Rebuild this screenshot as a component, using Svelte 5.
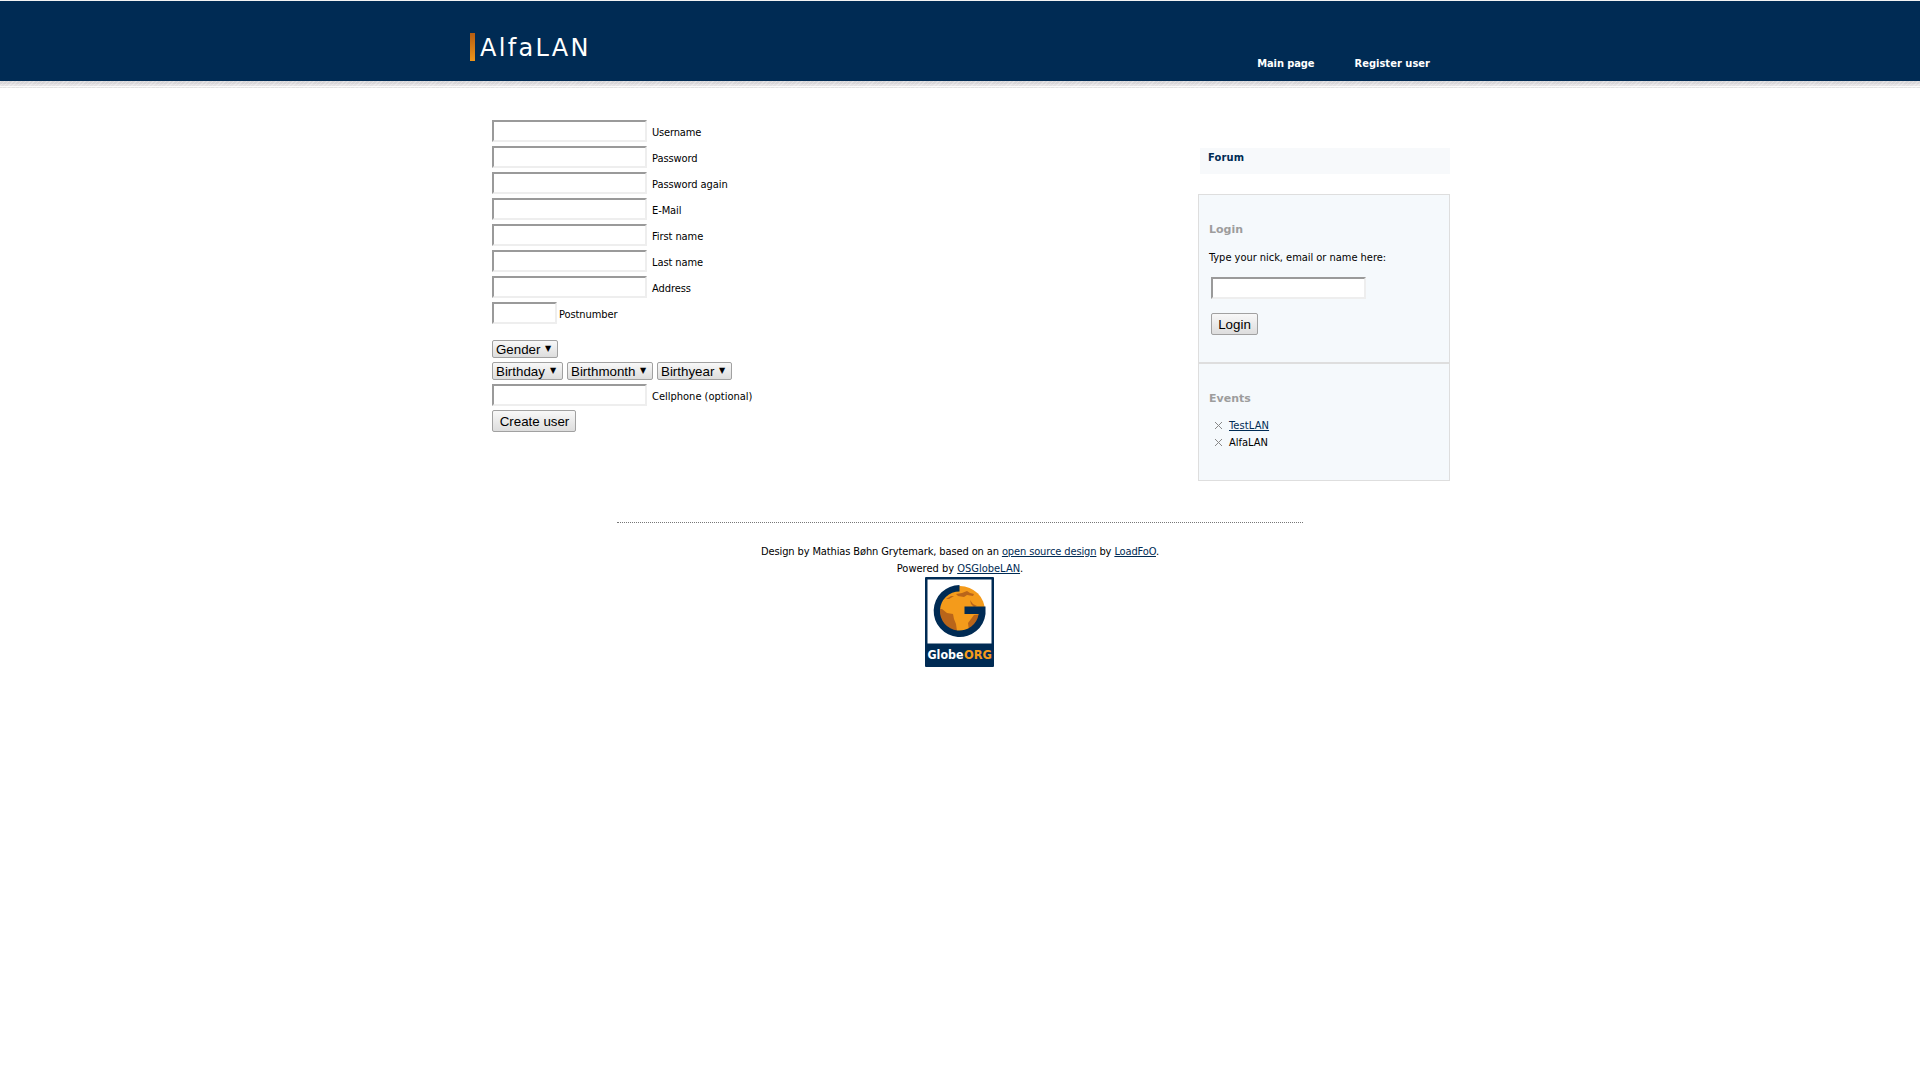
<script>
  const fields = ['Username', 'Password', 'Password again', 'E-Mail', 'First name', 'Last name', 'Address'];
  const birth = [['Birthday', 'day'], ['Birthmonth', 'month'], ['Birthyear', 'year']];
</script>

<header>
  <div class="wrap">
    <h1>AlfaLAN</h1>
    <nav><a href="#main">Main page</a><a href="#register">Register user</a></nav>
  </div>
</header>
<div class="shade"></div>

<main>
  <form class="register">
    {#each fields as field}
      <label class="row"><input type="text" /><span>{field}</span></label>
    {/each}
    <label class="row"><input class="short" type="text" /><span>Postnumber</span></label>
    <div class="selects first"><button type="button" class="select gender">Gender<i>▼</i></button></div>
    <div class="selects">
      {#each birth as [name, cls]}
        <button type="button" class="select {cls}">{name}<i>▼</i></button>
      {/each}
    </div>
    <label class="row phone"><input type="text" /><span>Cellphone (optional)</span></label>
    <button type="button" class="button create">Create user</button>
  </form>

  <aside>
    <a class="forum" href="#forum">Forum</a>
    <section class="login">
      <h2>Login</h2>
      <p>Type your nick, email or name here:</p>
      <input type="text" />
      <button type="button" class="button">Login</button>
    </section>
    <section class="events">
      <h2>Events</h2>
      <ul>
        {#each ['TestLAN', 'AlfaLAN'] as event, i}
          <li>
            <svg width="7" height="7" viewBox="0 0 7 7" shape-rendering="crispEdges">
              {#each [0, 1, 2, 3, 4, 5, 6] as n}
                <rect x={n} y={n} width="1" height="1" /><rect x={n} y={6 - n} width="1" height="1" />
              {/each}
            </svg>
            {#if i === 0}<a href="#test">{event}</a>{:else}<span>{event}</span>{/if}
          </li>
        {/each}
      </ul>
    </section>
  </aside>
</main>

<footer>
  <div class="credit">Design by Mathias Bøhn Grytemark, based on an <a href="#design">open source design</a> by <a href="#loadfoo">LoadFoO</a>.</div>
  <div>Powered by <a href="#os">OSGlobeLAN</a>.</div>
  <svg class="logo" width="69" height="90" viewBox="0 0 69 90">
    <rect width="69" height="90" rx="1" fill="#002b54" />
    <rect x="2.500" y="2.500" width="64" height="64" fill="#fff" />
    <circle cx="35" cy="34" r="25" fill="#f49b1b" />
    <path d="M12 32 L17 32 L22 36 L28 37 L29 42 L31 47 L32 54 L22 52 L14 44Z M44 54 L43 46 L46 42 L49 38 L58 37 L54 46Z" fill="#b9651a" />
    <path d="M31 17 L37 16 L42 14 L45 16 L49 17 L48 19 L42 18 L39 20 L33 19Z M45 23 L48 27 L52 29 L49 30 L46 27Z M21 22 L26 19 L29 19 L24 22Z" fill="#b9651a" />
    <path d="M34.500 8 A26 26 0 1 0 60.500 37 V29.500 H39.500 V37 H53.700 A19.500 19.500 0 1 1 34.500 14.500Z" fill="#002b54" />
    <text x="2.500" y="82" textLength="36" lengthAdjust="spacingAndGlyphs" fill="#fff">Globe</text>
    <text x="39" y="82" textLength="28" lengthAdjust="spacingAndGlyphs" fill="#f49b1b">ORG</text>
  </svg>
</footer>

<style>
  :global(body) { background: #fff; font: 11px/17px 'DejaVu Sans Condensed', 'DejaVu Sans', sans-serif; color: #000; }
  a { color: #002b54; }
  header { height: 80px; background: #002b54; border-top: 1px solid #f3f3f3; }
  .wrap { width: 980px; margin: 0 auto; display: flex; justify-content: space-between; }
  h1 { margin: 32px 0 0; height: 28px; padding-left: 10px; font: 24px/30px 'DejaVu Sans', sans-serif; letter-spacing: 2.300px; color: #fff; background: linear-gradient(#b55d12, #ee951b) 0 0 / 5px 28px no-repeat; }
  nav { display: flex; gap: 40px; padding: 54px 20px 0 0; font-weight: bold; }
  nav a { color: #fff; text-decoration: none; letter-spacing: 0.040px; }
  nav a:first-child { letter-spacing: -0.080px; }
  .shade { height: 7px; background: repeating-linear-gradient(135deg, #ffffff44 0 1px, transparent 1px 3px), linear-gradient(#d8d6d8 0 3px, #e4e2e4 3px 5px, #fafafa 5px 6px, #e4e4e4 6px 7px); }
  main { width: 980px; margin: 0 auto; display: flex; justify-content: space-between; }
  .register { padding: 32px 0 0 22px; display: flex; flex-direction: column; align-items: flex-start; }
  .row { display: flex; height: 26px; gap: 5px; }
  .row span { padding-top: 4px; letter-spacing: -0.080px; }
  .row:first-child span { letter-spacing: -0.160px; }
  .phone span { letter-spacing: 0; }
  input { box-sizing: border-box; width: 155px; height: 22px; margin: 0; padding: 1px; border: 2px solid; border-color: #9a9a9a #eee #eee #9a9a9a; background: #fff; outline: 0; }
  input.short { width: 65px; margin-right: -3px; }
  .selects { display: flex; height: 22px; gap: 4px; }
  .first { margin-top: 12px; }
  .select, .button { box-sizing: border-box; border: 1px solid #a1a1a1; border-radius: 2px; background: linear-gradient(#f8f8f8, #dddddd); color: #000; font: 13.333px/16px 'Liberation Sans', sans-serif; margin: 0; }
  .select { height: 18px; padding: 1px 6px 0 3px; display: flex; justify-content: space-between; width: 66px; }
  .select i { width: 6px; font: 8px/14px 'DejaVu Sans', sans-serif; }
  .select.day { width: 71px; }
  .select.month { width: 86px; }
  .select.year { width: 75px; }
  .button { height: 22px; padding: 1px 0 0; width: 47px; }
  .create { width: 84px; padding-left: 1px; }
  aside { width: 252px; padding-top: 60px; display: flex; flex-direction: column; }
  .forum { margin-left: 2px; height: 26px; padding: 1px 0 0 8px; background: #f7f9fb; font-weight: bold; letter-spacing: 0.200px; text-decoration: none; box-sizing: border-box; }
  section { box-sizing: border-box; border: 1px solid #dedede; background: #f5f9fc; padding: 26px 10px 0; }
  .login { margin-top: 20px; height: 169px; display: flex; flex-direction: column; align-items: flex-start; }
  .events { height: 118px; }
  h2 { margin: 0; font: bold 11px/17px 'DejaVu Sans', sans-serif; color: #9d9d9d; }
  p { margin: 11px 0; letter-spacing: -0.030px; }
  .login input { margin: 0 0 14px 2px; }
  .login .button { margin-left: 2px; }
  ul { list-style: none; margin: 10px 0 0; padding: 0 0 0 6px; }
  li { display: flex; align-items: center; gap: 7px; }
  li a { letter-spacing: 0.120px; }
  li svg { fill: #888; }
  footer { width: 686px; margin: 41px auto 0; padding-top: 20px; border-top: 1px dotted #777; text-align: center; }
  .credit { letter-spacing: -0.118px; }
  .logo { display: block; margin: 0 0 0 308px; }
  .logo text { font: bold 12px 'DejaVu Sans', sans-serif; }
</style>
